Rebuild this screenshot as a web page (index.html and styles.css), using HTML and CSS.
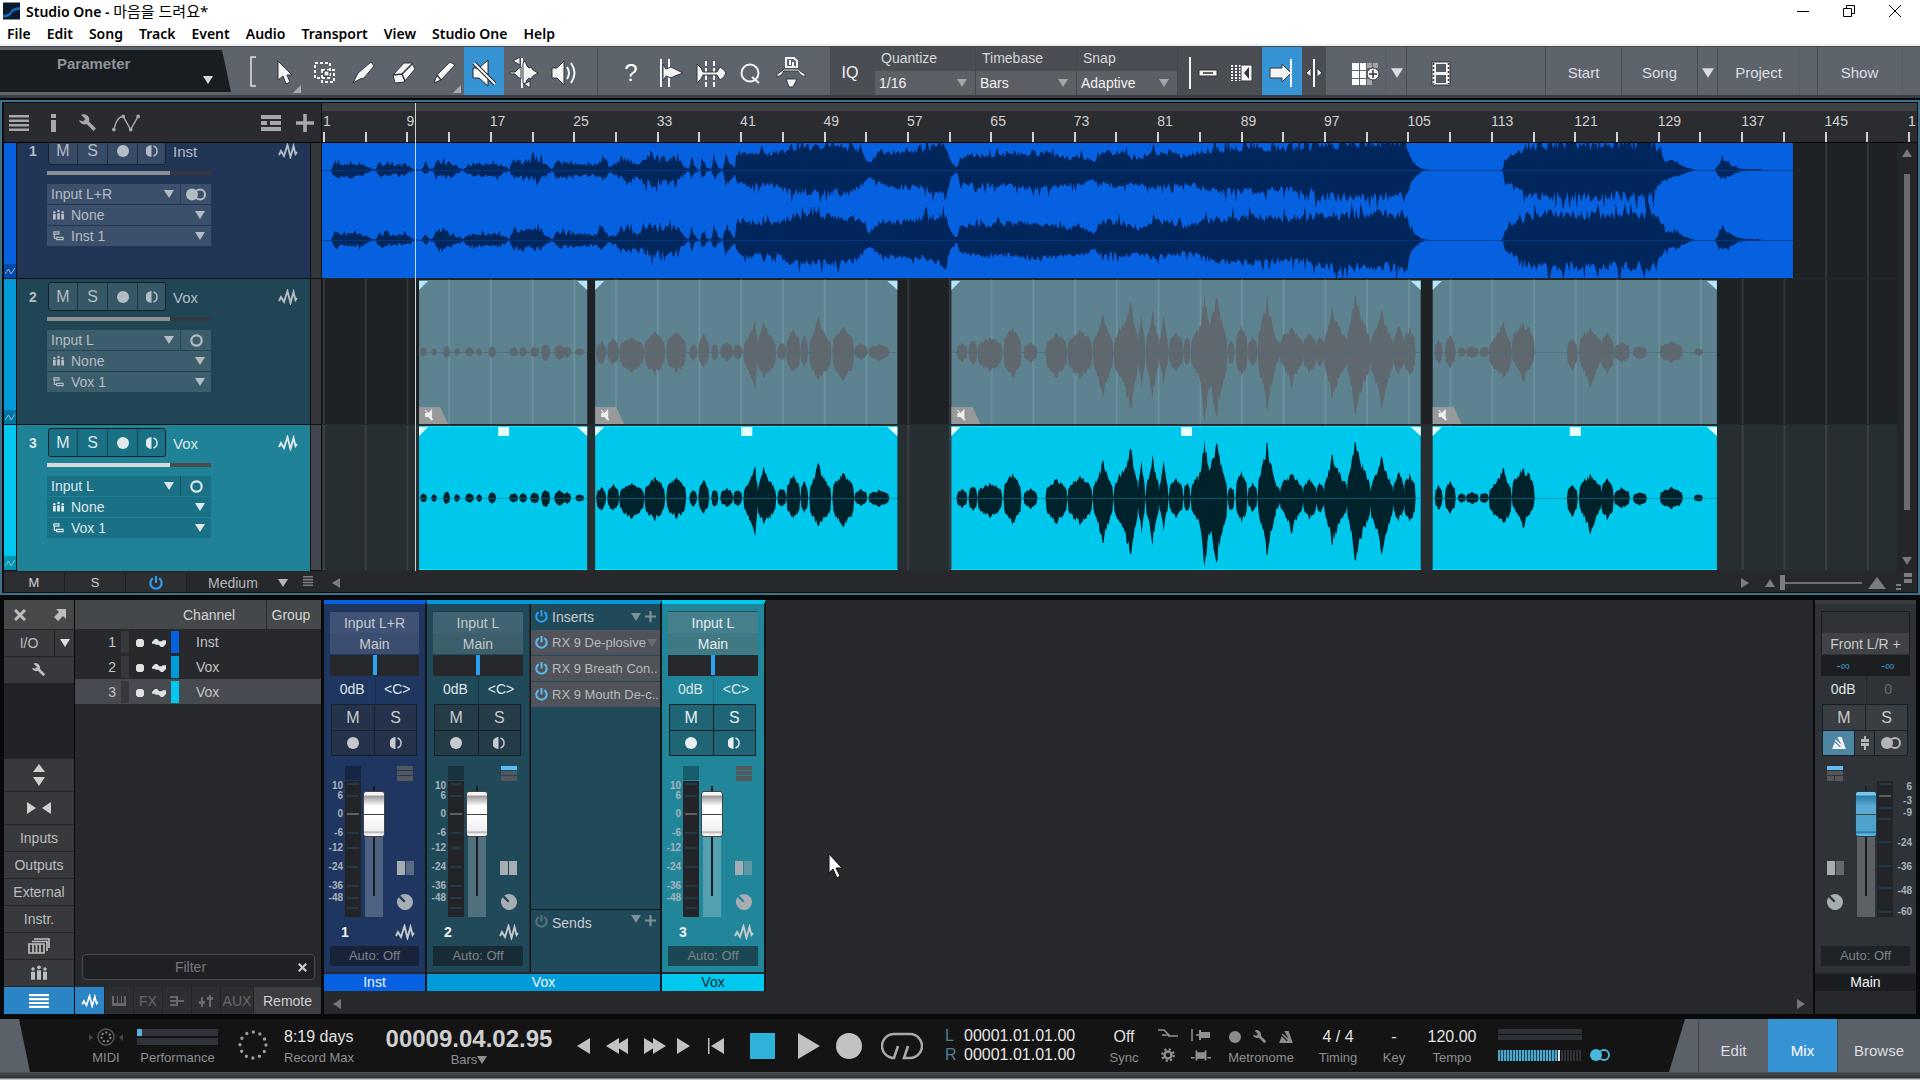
FILE: index.html
```html
<!DOCTYPE html>
<html lang="ko">
<head>
<meta charset="utf-8">
<title>Studio One - 마음을 드려요*</title>
<link rel="stylesheet" href="styles.css">
</head>
<body>
<svg class="defs" aria-hidden="true">
  <symbol id="down" viewBox="0 0 10 8"><path d="M0 0h10L5 8z"/></symbol>
  <symbol id="up" viewBox="0 0 10 8"><path d="M0 8h10L5 0z"/></symbol>
  <symbol id="left" viewBox="0 0 8 10"><path d="M8 0v10L0 5z"/></symbol>
  <symbol id="right" viewBox="0 0 8 10"><path d="M0 0v10l8-5z"/></symbol>
  <symbol id="dot" viewBox="0 0 12 12"><circle cx="6" cy="6" r="6"/></symbol>
  <symbol id="mon" viewBox="0 0 12 12"><path d="M5.500 0v12A6 6 0 0 1 5.500 0z"/><path d="M7.500 1a5.300 5.300 0 0 1 0 10" fill="none" stroke="currentColor" stroke-width="1.500"/></symbol>
  <symbol id="wave" viewBox="0 0 20 16"><path d="M1 12l2-4 3 5 3.500-11 3 12L15.500 3l2 8 1.500-2" fill="none" stroke="currentColor" stroke-width="1.900"/></symbol>
  <symbol id="stereo" viewBox="0 0 20 12"><circle cx="6" cy="6" r="6"/><circle cx="14" cy="6" r="5" fill="none" stroke="currentColor" stroke-width="2"/></symbol>
  <symbol id="mono" viewBox="0 0 12 12"><circle cx="6" cy="6" r="4.800" fill="none" stroke="currentColor" stroke-width="2"/></symbol>
  <symbol id="inst" viewBox="0 0 12 12"><path d="M0 5h3v6H0zM4.500 4h3v7h-3zM9 5h3v6H9z"/><circle cx="1.500" cy="3" r="1.300"/><circle cx="6" cy="1.700" r="1.400"/><circle cx="10.500" cy="3" r="1.300"/></symbol>
  <symbol id="layer" viewBox="0 0 12 12"><path d="M1 1.500h5.500V4H1zM4 7.500h7V10H4zM1.500 4v4.500H4" fill="none" stroke="currentColor" stroke-width="1.300"/></symbol>
  <symbol id="power" viewBox="0 0 14 14"><path d="M4 2.300a5.600 5.600 0 1 0 6 0M7 0v7" fill="none" stroke="currentColor" stroke-width="2.200"/></symbol>
  <symbol id="wrench" viewBox="0 0 18 18"><path d="M2 1a5.500 5.500 0 0 1 8 6.500l7 7-2.500 2.500-7-7A5.500 5.500 0 0 1 0 6l4 1.500L6.500 5z"/></symbol>
  <symbol id="auto" viewBox="0 0 10 8"><path d="M0 7l3.500-5L6 7l4-6" fill="none" stroke="currentColor"/></symbol>
  <symbol id="lines" viewBox="0 0 20 16"><path d="M0 0h20v2.500H0zM0 4.500h20V7H0zM0 9h20v2.500H0zM0 13.500h20V16H0z"/></symbol>
  <symbol id="plus" viewBox="0 0 12 12"><path d="M4.800 0h2.400v4.800H12v2.400H7.200V12H4.800V7.200H0V4.800h4.800z"/></symbol>
  <symbol id="cross" viewBox="0 0 12 12"><path d="M1 1l10 10M11 1L1 11" stroke="currentColor" stroke-width="3"/></symbol>
  <symbol id="stack" viewBox="0 0 16 15"><path d="M0 0h16v4H0zM0 5h16v4H0zM0 10h16v5H0z"/></symbol>
  <symbol id="knob" viewBox="0 0 16 16"><path d="M8 0a8 8 0 1 1-6.500 3.300L7 8.500 8.500 7 3.200 1.600A8 8 0 0 1 8 0z"/></symbol>
  <symbol id="split" viewBox="0 0 17 14"><path d="M0 0h8v14H0z"/><path d="M9 0h8v14H9z" opacity=".45"/></symbol>
  <symbol id="metro" viewBox="0 0 16 14"><path d="M6 0h5l5 14H0l3-8 6 6 1-1-7-7 1-1 7 6z"/></symbol>
  <symbol id="sine" viewBox="0 0 14 8"><path d="M0 4l4-4 3 3h3l1-1h3v2l-4 4-3-3H4L3 4z"/></symbol>
  <symbol id="speaker-off" viewBox="0 0 24 30"><path d="M1 10h6l9-8v26l-9-8H1z" fill="#fff" stroke="#222" stroke-width="1"/><path d="M2 5l21 21" stroke="#222" stroke-width="4"/><path d="M2 5l21 21" stroke="#fff" stroke-width="2"/></symbol>
</svg>

<header class="window-head">
  <div class="title-row">
    <svg class="app-icon" viewBox="0 0 18 18"><path fill="#0b1a2c" d="M0 0h18v18H0z"/><path d="M0 13q6 0 8-4t10-4v3q-7 0-9 4t-9 4z" fill="#1769b5"/></svg>
    <h1>Studio One - <span>마음을 드려요*</span></h1>
    <div class="win-buttons">
      <button aria-label="Minimize"><svg viewBox="0 0 14 14"><path d="M1 7.500h12"/></svg></button>
      <button aria-label="Restore"><svg viewBox="0 0 14 14"><path d="M1.500 4.500h8v8h-8zM4.500 4V1.500h8v8H10"/></svg></button>
      <button aria-label="Close"><svg viewBox="0 0 14 14"><path d="M1 1l12 12M13 1L1 13"/></svg></button>
    </div>
  </div>
  <nav class="menu"><a href="#">File</a><a href="#">Edit</a><a href="#">Song</a><a href="#">Track</a><a href="#">Event</a><a href="#">Audio</a><a href="#">Transport</a><a href="#">View</a><a href="#">Studio One</a><a href="#">Help</a></nav>
</header>

<div class="toolbar">
  <button class="parameter"><span>Parameter</span><svg class="i-down"><use href="#down"/></svg></button>
  <div class="tools">
    <svg class="bracket" viewBox="0 0 8 32"><path d="M7 1H2v29h5"/></svg>
    <button class="tool more" aria-label="Arrow"><svg viewBox="0 0 40 36"><path class="o" d="M14 6v19l5-4 3 8 4-2-3-7h5z"/></svg></button>
    <button class="tool" aria-label="Range"><svg viewBox="0 0 40 36"><path class="l" stroke-dasharray="3 2" d="M11 8h15v15H11z"/><path class="l" stroke-dasharray="3 2" d="M18 15h12v12H18z"/><path class="o" d="M20 16h5v5h-5z"/></svg></button>
    <button class="tool" aria-label="Split"><svg viewBox="0 0 40 36"><path class="o" d="M9 28l5-10L27 7l3 4-10 12-4 1z"/></svg></button>
    <button class="tool" aria-label="Eraser"><svg viewBox="0 0 40 36"><path class="o" d="M9 20L20 8h8l3 6-11 13-9 1z"/><path class="k" d="M9 20l9-1L29 8M18 19l3 7"/></svg></button>
    <button class="tool more" aria-label="Paint"><svg viewBox="0 0 40 36"><path class="o" d="M10 28l3-8L26 7l5 3-14 15z"/><path class="k" d="M13 20l4 5"/></svg></button>
    <button class="tool on" aria-label="Mute"><svg viewBox="0 0 40 36"><use href="#speaker-off" x="8" y="3" width="24" height="30"/></svg></button>
    <button class="tool" aria-label="Bend"><svg viewBox="0 0 40 36"><path class="l" d="M18 3v30"/><path class="o" d="M6 17h5l3-3 3-2v12l-3-2-3-3H6zM19 8l2-2 2 5 2 2 2-1 2 3 5 3-5 3-2 3-2-1-2 2-2 5-2-2z"/><path class="o" d="M9 6l7-4v8zM20 29l6-3v7z"/></svg></button>
    <button class="tool" aria-label="Listen"><svg viewBox="0 0 40 36"><path class="o" d="M8 13h5l7-7v24l-7-7H8z"/><path class="l" d="M23 12q4 6 0 12M27 8q7 10 0 20"/></svg></button>
    <span class="rule"></span>
    <button class="tool q" aria-label="Help">?</button>
    <button class="tool" aria-label="Strip silence"><svg viewBox="0 0 40 36"><path class="l" d="M10 4v28M18 4v28"/><path class="o" d="M12 9l3 5 5-2 4 2 8 4-8 3-4 2-5-2-3 5z"/></svg></button>
    <button class="tool" aria-label="Transients"><svg viewBox="0 0 40 36"><path class="l" stroke-dasharray="5 2" d="M15 6v26M23 6v26"/><path class="o" d="M6 9l4 4 2 4h14l3-5 4 3 2 3-2 4-4 3-3-5H12l-2 4-4 4z"/></svg></button>
    <button class="tool" aria-label="Quantize"><svg viewBox="0 0 40 36"><circle class="l" cx="19" cy="18" r="8.500"/><path class="l" d="M21 22l7 6"/></svg></button>
    <button class="tool" aria-label="Macro"><svg viewBox="0 0 40 36"><path class="l" d="M15 3h8l3 3v6H15zM19 5v5M22 7v4"/><path class="o" d="M6 22q5-1 7-6h14q2 5 7 6v-3q-4-2-7-5H13q-3 3-7 5zM15 24h11l-4 8h-4z"/></svg></button>
  </div>
  <div class="snap-area">
    <button class="iq" aria-label="Input Quantize">IQ</button>
    <label>Quantize<span class="sel"><select><option>1/16</option></select><svg class="i-down"><use href="#down"/></svg></span></label>
    <label>Timebase<span class="sel"><select><option>Bars</option></select><svg class="i-down"><use href="#down"/></svg></span></label>
    <label>Snap<span class="sel"><select><option>Adaptive</option></select><svg class="i-down"><use href="#down"/></svg></span></label>
    <button class="mini" aria-label="Cursor snap"><svg viewBox="0 0 40 36"><path class="l" d="M11 2v32"/><path class="o" d="M20 15h18v6H20z"/><path class="k" d="M24 18h10"/></svg></button>
    <button class="mini" aria-label="Snap to grid"><svg viewBox="0 0 40 36"><path class="l" stroke-dasharray="2 1" d="M11 10v16M15 10v16M19 10v16"/><path class="o" d="M20 10h11v16H20z"/><path fill="#333" d="M28 12v12l-5-6z"/></svg></button>
    <button class="tool on" aria-label="Autoscroll"><svg viewBox="0 0 40 36"><path class="o" d="M8 13h12V9l9 9-9 9v-4H8z"/><path class="l" d="M29 4v28"/></svg></button>
    <button class="thin" aria-label="Playhead"><svg viewBox="0 0 24 36"><path class="l" d="M12 4v28"/><path class="o" d="M9 13v9l-5-4zM15 13v9l5-4z"/></svg></button>
  </div>
  <div class="pages">
    <button class="gridbtn" aria-label="Pads"><svg viewBox="0 0 40 36"><path fill="#fff" d="M7 8h7v7H7zM15 8h6v7h-6zM7 16h7v7H7zM15 16h6v7h-6zM7 24h7v6H7zM15 24h6v6h-6z"/><path fill="#a0a4a8" d="M22 8h5v5h-5zM28 8h5v5h-5zM22 24h5v6h-5z"/><circle class="o" cx="28" cy="19" r="6"/><path class="k" d="M28 15v8M24 19h8"/></svg></button>
    <button class="arrow" aria-label="Pad options"><svg class="i-down"><use href="#down"/></svg></button>
    <button class="film" aria-label="Video"><svg viewBox="0 0 40 36"><path class="o" d="M10 7h18v23H10z"/><path fill="#555b62" d="M14 9h10v8H14zM14 20h10v8H14z"/><path d="M11.500 8v21M26.500 8v21" stroke="#333" stroke-width="1.500" stroke-dasharray="2 2"/></svg></button>
    <button class="page start">Start</button><button class="page song">Song</button><button class="arrow" aria-label="Song options"><svg class="i-down"><use href="#down"/></svg></button><button class="page project">Project</button><span class="thinline"></span><button class="page show">Show</button>
  </div>
</div>

<main class="arrange">
  <div class="arr-head">
    <div class="arr-tools">
      <button aria-label="Track list"><svg width="20" height="16"><use href="#lines"/></svg></button>
      <button aria-label="Inspector"><svg width="8" height="20" viewBox="0 0 8 20"><path d="M1 1h5v4H1zM1 7h5v12H1z"/></svg></button>
      <button aria-label="Options"><svg width="18" height="18"><use href="#wrench"/></svg></button>
      <button aria-label="Automation"><svg width="28" height="20" viewBox="0 0 30 20"><path d="M2 17Q5 3 12 3l8 14 8-14" fill="none" stroke="currentColor" stroke-width="1.500"/><circle cx="2" cy="17" r="2"/><circle cx="12" cy="3" r="2"/><circle cx="20" cy="17" r="2"/><circle cx="28" cy="3" r="2"/></svg></button>
      <span class="grow"></span>
      <button aria-label="Global tracks"><svg width="20" height="16" viewBox="0 0 20 16"><path d="M0 0h20v4H0zM0 6h6v4H0zM9 6h11v4H9zM0 12h20v4H0z"/></svg></button>
      <button aria-label="Add track"><svg width="18" height="18"><use href="#plus"/></svg></button>
    </div>
    <div class="ruler"><span>1</span><span>9</span><span>17</span><span>25</span><span>33</span><span>41</span><span>49</span><span>57</span><span>65</span><span>73</span><span>81</span><span>89</span><span>97</span><span>105</span><span>113</span><span>121</span><span>129</span><span>137</span><span>145</span><span>1</span></div>
  </div>

  <div class="arr-body">
    <div class="tracks">
      <section class="track t1">
        <div class="strip"><svg><use href="#auto"/></svg></div>
        <div class="info">
          <b class="num">1</b>
          <div class="msrm"><button>M</button><button>S</button><button aria-label="Record"><svg><use href="#dot"/></svg></button><button aria-label="Monitor"><svg><use href="#mon"/></svg></button></div>
          <span class="name">Inst</span><svg class="wv"><use href="#wave"/></svg>
          <input class="vol" type="range" aria-label="Volume 1" value="76">
          <div class="routes">
            <div><select aria-label="Input 1"><option>Input L+R</option></select><svg class="i-down"><use href="#down"/></svg><button class="ch" aria-label="Stereo"><svg class="st"><use href="#stereo"/></svg></button></div>
            <div><svg class="ri"><use href="#inst"/></svg><select aria-label="Group 1"><option>None</option></select><svg class="i-down"><use href="#down"/></svg></div>
            <div><svg class="ri"><use href="#layer"/></svg><select aria-label="Layer 1"><option>Inst 1</option></select><svg class="i-down"><use href="#down"/></svg></div>
          </div>
        </div>
        <div class="meter"></div>
        <svg class="lane" id="lane1" viewBox="0 0 1574 146" preserveAspectRatio="none"></svg>
      </section>
      <section class="track t2">
        <div class="strip"><svg><use href="#auto"/></svg></div>
        <div class="info">
          <b class="num">2</b>
          <div class="msrm"><button>M</button><button>S</button><button aria-label="Record"><svg><use href="#dot"/></svg></button><button aria-label="Monitor"><svg><use href="#mon"/></svg></button></div>
          <span class="name">Vox</span><svg class="wv"><use href="#wave"/></svg>
          <input class="vol" type="range" aria-label="Volume 2" value="76">
          <div class="routes">
            <div><select aria-label="Input 2"><option>Input L</option></select><svg class="i-down"><use href="#down"/></svg><button class="ch" aria-label="Mono"><svg><use href="#mono"/></svg></button></div>
            <div><svg class="ri"><use href="#inst"/></svg><select aria-label="Group 2"><option>None</option></select><svg class="i-down"><use href="#down"/></svg></div>
            <div><svg class="ri"><use href="#layer"/></svg><select aria-label="Layer 2"><option>Vox 1</option></select><svg class="i-down"><use href="#down"/></svg></div>
          </div>
        </div>
        <div class="meter"></div>
        <svg class="lane" id="lane2" viewBox="0 0 1574 146" preserveAspectRatio="none"></svg>
      </section>
      <section class="track t3">
        <div class="strip"><svg><use href="#auto"/></svg></div>
        <div class="info">
          <b class="num">3</b>
          <div class="msrm"><button>M</button><button>S</button><button aria-label="Record"><svg><use href="#dot"/></svg></button><button aria-label="Monitor"><svg><use href="#mon"/></svg></button></div>
          <span class="name">Vox</span><svg class="wv"><use href="#wave"/></svg>
          <input class="vol" type="range" aria-label="Volume 3" value="76">
          <div class="routes">
            <div><select aria-label="Input 3"><option>Input L</option></select><svg class="i-down"><use href="#down"/></svg><button class="ch" aria-label="Mono"><svg><use href="#mono"/></svg></button></div>
            <div><svg class="ri"><use href="#inst"/></svg><select aria-label="Group 3"><option>None</option></select><svg class="i-down"><use href="#down"/></svg></div>
            <div><svg class="ri"><use href="#layer"/></svg><select aria-label="Layer 3"><option>Vox 1</option></select><svg class="i-down"><use href="#down"/></svg></div>
          </div>
        </div>
        <div class="meter"></div>
        <svg class="lane" id="lane3" viewBox="0 0 1574 146" preserveAspectRatio="none"></svg>
      </section>
    </div>
    <div class="vscroll"><svg class="i-down"><use href="#up"/></svg><i></i><svg class="i-down"><use href="#down"/></svg></div>
  </div>
  <div class="playhead"></div>

  <div class="arr-foot">
    <button class="cell">M</button><button class="cell">S</button><button class="cell pw" aria-label="Power"><svg width="14" height="14"><use href="#power"/></svg></button>
    <label class="size"><select aria-label="Track height"><option>Medium</option></select><svg class="i-down"><use href="#down"/></svg></label>
    <svg class="ln" width="10" height="10" viewBox="0 0 20 16" preserveAspectRatio="none"><use href="#lines"/></svg>
    <svg class="tri" width="8" height="10"><use href="#left"/></svg>
    <span class="grow"></span>
    <svg class="tri r" width="8" height="10"><use href="#right"/></svg>
    <svg class="tri" width="12" height="8"><use href="#up"/></svg>
    <input class="zoom" type="range" aria-label="Zoom" value="0">
    <svg class="tri big" width="18" height="12" viewBox="0 0 10 8" preserveAspectRatio="none"><use href="#up"/></svg>
    <svg class="dots" width="18" height="18" viewBox="0 0 18 18"><path d="M9 1h8v4H9zM9 7h8v4H9zM1 12h5v2H1zM1 16h5v2H1z"/></svg>
  </div>
</main>

<section class="mixer">
  <aside class="mix-nav">
    <div class="row tall"><button aria-label="Close"><svg width="12" height="12"><use href="#cross"/></svg></button><button aria-label="Detach"><svg width="12" height="12" viewBox="0 0 12 12"><path d="M2 0h10v10L9 7l-5 5-4-4 5-5z"/></svg></button></div>
    <div class="row io"><button>I/O</button><button aria-label="I/O options"><svg class="i-down"><use href="#down"/></svg></button></div>
    <button class="row"><svg width="14" height="14"><use href="#wrench"/></svg></button>
    <span class="gap"></span>
    <button class="row tri2" aria-label="Height"><svg width="12" height="22" viewBox="0 0 12 22"><path d="M0 8h12L6 0zM0 13h12l-6 9z"/></svg></button>
    <button class="row tri2" aria-label="Width"><svg width="24" height="12" viewBox="0 0 24 12"><path d="M0 0v12l9-6zM24 0v12l-9-6z"/></svg></button>
    <button class="row">Inputs</button><button class="row">Outputs</button><button class="row">External</button><button class="row">Instr.</button>
    <button class="row" aria-label="Banks"><svg width="22" height="16" viewBox="0 0 22 16"><path d="M1 6h15v9H1zM4 3.500h15V13M6 1h15v9M5 6v9M8.500 6v9M12 6v9" fill="none" stroke="currentColor" stroke-width="1.700"/></svg></button>
    <button class="row" aria-label="Groups"><svg width="16" height="16"><use href="#inst"/></svg></button>
    <button class="row on" aria-label="Channel list"><svg width="20" height="14" viewBox="0 0 20 16" preserveAspectRatio="none"><use href="#lines"/></svg></button>
  </aside>
  <div class="ch-list">
    <table>
      <colgroup><col class="w-n"><col class="w-m"><col class="w-s"><col class="w-c"><col><col class="w-g"></colgroup>
      <thead><tr><th colspan="4"></th><th class="chn">Channel</th><th class="grp">Group</th></tr></thead>
      <tbody>
        <tr><td class="n">1</td><td class="m"><i></i></td><td class="s"><svg width="8" height="8"><use href="#dot"/></svg><svg width="14" height="8"><use href="#sine"/></svg></td><td class="c"><i class="c1"></i></td><td class="t" colspan="2">Inst</td></tr>
        <tr><td class="n">2</td><td class="m"><i></i></td><td class="s"><svg width="8" height="8"><use href="#dot"/></svg><svg width="14" height="8"><use href="#sine"/></svg></td><td class="c"><i class="c2"></i></td><td class="t" colspan="2">Vox</td></tr>
        <tr class="sel-row"><td class="n">3</td><td class="m"><i></i></td><td class="s"><svg width="8" height="8"><use href="#dot"/></svg><svg width="14" height="8"><use href="#sine"/></svg></td><td class="c"><i class="c3"></i></td><td class="t" colspan="2">Vox</td></tr>
      </tbody>
    </table>
    <div class="filter"><input type="text" placeholder="Filter" aria-label="Filter"><button aria-label="Clear filter"><svg width="9" height="9"><use href="#cross"/></svg></button></div>
    <div class="tabs">
      <button class="on" aria-label="Audio"><svg width="18" height="14"><use href="#wave"/></svg></button>
      <button aria-label="Instruments"><svg width="14" height="10" viewBox="0 0 14 10"><path d="M0 0h2v7h3V0h1v7h3V0h1v7h2V0h2v10H0z"/></svg></button>
      <button>FX</button>
      <button aria-label="Bus"><svg width="14" height="10" viewBox="0 0 14 10"><path d="M0 1h7v8H0M0 5h14" fill="none" stroke="currentColor" stroke-width="2"/></svg></button>
      <button aria-label="VCA"><svg width="14" height="12" viewBox="0 0 14 12"><path d="M0 6h6v3H0zM2 2h2v10H2zM8 2h6v3H8zM10 0h2v12h-2z"/></svg></button>
      <button class="aux">AUX</button>
      <button class="remote">Remote</button>
    </div>
  </div>

  <div class="console">
    <div class="channels">
      <section class="chan k1">
        <div class="cstrip">
          <div class="io-box"><button>Input L+R</button><button>Main</button></div>
          <div class="pan"><i></i></div>
          <div class="vals"><span>0dB</span><span>&lt;C&gt;</span></div>
          <div class="ms"><button>M</button><button>S</button><button aria-label="Record"><svg><use href="#dot"/></svg></button><button aria-label="Monitor"><svg><use href="#mon"/></svg></button></div>
          <div class="fader">
            <svg class="scale" viewBox="0 0 36 152"><path class="cap" d="M19 0h16v14H19z"/><path class="mt" d="M19 15h16v136H19z"/><path class="tk" d="M21 18h12M21 30h12M21 67h12M21 82h12M21 101h12M21 120h12M21 132h12M21 142h12"/><path class="tz" d="M21 48h12"/><g><text x="17" y="23">10</text><text x="17" y="33">6</text><text x="17" y="51">0</text><text x="17" y="70">-6</text><text x="17" y="85">-12</text><text x="17" y="104">-24</text><text x="17" y="123">-36</text><text x="17" y="135">-48</text></g></svg>
            <input class="fd" type="range" aria-label="Level 1" value="94">
            <div class="side"><svg class="stk"><use href="#stack"/></svg><svg class="spl"><use href="#split"/></svg><svg class="knb"><use href="#knob"/></svg></div>
          </div>
          <div class="foot"><b>1</b><svg class="wv"><use href="#wave"/></svg></div>
          <button class="automode">Auto: Off</button>
        </div>
        <footer>Inst</footer>
      </section>
      <section class="chan k2">
        <div class="pair">
          <div class="cstrip">
            <div class="io-box"><button>Input L</button><button>Main</button></div>
            <div class="pan"><i></i></div>
            <div class="vals"><span>0dB</span><span>&lt;C&gt;</span></div>
            <div class="ms"><button>M</button><button>S</button><button aria-label="Record"><svg><use href="#dot"/></svg></button><button aria-label="Monitor"><svg><use href="#mon"/></svg></button></div>
            <div class="fader">
              <svg class="scale" viewBox="0 0 36 152"><path class="cap" d="M19 0h16v14H19z"/><path class="mt" d="M19 15h16v136H19z"/><path class="tk" d="M21 18h12M21 30h12M21 67h12M21 82h12M21 101h12M21 120h12M21 132h12M21 142h12"/><path class="tz" d="M21 48h12"/><g><text x="17" y="23">10</text><text x="17" y="33">6</text><text x="17" y="51">0</text><text x="17" y="70">-6</text><text x="17" y="85">-12</text><text x="17" y="104">-24</text><text x="17" y="123">-36</text><text x="17" y="135">-48</text></g></svg>
              <input class="fd" type="range" aria-label="Level 2" value="94">
              <div class="side"><svg class="stk" viewBox="0 0 16 15"><path d="M0 5h16v4H0zM0 10h16v5H0z"/><path fill="#5cbcf5" d="M0 0h16v4H0z"/></svg><svg class="spl" viewBox="0 0 17 14"><path d="M0 0h8v14H0zM9 0h8v14H9z"/></svg><svg class="knb"><use href="#knob"/></svg></div>
            </div>
            <div class="foot"><b>2</b><svg class="wv"><use href="#wave"/></svg></div>
            <button class="automode">Auto: Off</button>
          </div>
          <div class="racks">
            <div class="rack-h"><svg class="pwr on"><use href="#power"/></svg><span>Inserts</span><svg class="i-down"><use href="#down"/></svg><svg class="pl"><use href="#plus"/></svg></div>
            <button class="fx"><svg class="pwr"><use href="#power"/></svg><span>RX 9 De-plosive</span><svg class="i-down"><use href="#down"/></svg></button>
            <button class="fx"><svg class="pwr"><use href="#power"/></svg><span>RX 9 Breath Con..</span></button>
            <button class="fx"><svg class="pwr"><use href="#power"/></svg><span>RX 9 Mouth De-c..</span></button>
            <div class="rack-h sends"><svg class="pwr"><use href="#power"/></svg><span>Sends</span><svg class="i-down"><use href="#down"/></svg><svg class="pl"><use href="#plus"/></svg></div>
          </div>
        </div>
        <footer>Vox</footer>
      </section>
      <section class="chan k3">
        <div class="cstrip">
          <div class="io-box"><button>Input L</button><button>Main</button></div>
          <div class="pan"><i></i></div>
          <div class="vals"><span>0dB</span><span>&lt;C&gt;</span></div>
          <div class="ms"><button>M</button><button>S</button><button aria-label="Record"><svg><use href="#dot"/></svg></button><button aria-label="Monitor"><svg><use href="#mon"/></svg></button></div>
          <div class="fader">
            <svg class="scale" viewBox="0 0 36 152"><path class="cap" d="M19 0h16v14H19z"/><path class="mt" d="M19 15h16v136H19z"/><path class="tk" d="M21 18h12M21 30h12M21 67h12M21 82h12M21 101h12M21 120h12M21 132h12M21 142h12"/><path class="tz" d="M21 48h12"/><g><text x="17" y="23">10</text><text x="17" y="33">6</text><text x="17" y="51">0</text><text x="17" y="70">-6</text><text x="17" y="85">-12</text><text x="17" y="104">-24</text><text x="17" y="123">-36</text><text x="17" y="135">-48</text></g></svg>
            <input class="fd" type="range" aria-label="Level 3" value="94">
            <div class="side"><svg class="stk"><use href="#stack"/></svg><svg class="spl"><use href="#split"/></svg><svg class="knb"><use href="#knob"/></svg></div>
          </div>
          <div class="foot"><b>3</b><svg class="wv"><use href="#wave"/></svg></div>
          <button class="automode">Auto: Off</button>
        </div>
        <footer>Vox</footer>
      </section>
    </div>
    <div class="hscroll"><svg width="8" height="10"><use href="#left"/></svg><svg width="8" height="10"><use href="#right"/></svg></div>
    <svg class="pointer" viewBox="0 0 14 26"><path d="M1 1v19l4-4 4 9 3-2-4-8h6z" fill="#fff" stroke="#111"/></svg>
  </div>

  <section class="chan main-out">
    <div class="cstrip">
      <div class="io-box"><button aria-label="Output"></button><button>Front L/R +</button></div>
      <div class="pan inf"><span>-∞</span><span>-∞</span></div>
      <div class="vals"><span>0dB</span><span class="off">0</span></div>
      <div class="ms"><button>M</button><button>S</button><div class="trio"><button class="mtr" aria-label="Metronome"><svg width="14" height="12"><use href="#metro"/></svg></button><button aria-label="Gain"><svg width="8" height="14" viewBox="0 0 8 14"><path d="M3 0h2v3h3v3H0V3h3zM0 7h8v3H5v4H3v-4H0z"/></svg></button><button aria-label="Channel mode"><svg width="20" height="12"><use href="#stereo"/></svg></button></div></div>
      <div class="fader">
        <div class="side"><svg class="stk" viewBox="0 0 16 15"><path d="M0 5h16v4H0zM0 10h7v5H0zM8 10h8v5H8z"/><path fill="#5cbcf5" d="M0 0h16v4H0z"/></svg><svg class="spl"><use href="#split"/></svg><svg class="knb"><use href="#knob"/></svg></div>
        <input class="fd" type="range" aria-label="Main level" value="94">
        <svg class="scale" viewBox="0 0 36 152"><path class="mt" d="M0 15h16v136H0z"/><path class="tk" d="M2 18h12M2 42h12M2 53h12M2 76h12M2 100h12M2 122h12M2 146h12"/><path class="tz" d="M2 30h12"/><g><text x="35" y="24">6</text><text x="35" y="38">-3</text><text x="35" y="50">-9</text><text x="35" y="80">-24</text><text x="35" y="104">-36</text><text x="35" y="128">-48</text><text x="35" y="149">-60</text></g></svg>
      </div>
      <div class="foot"></div>
      <button class="automode">Auto: Off</button>
    </div>
    <footer>Main</footer>
  </section>
</section>

<footer class="transport">
  <div class="t-panel">
    <div class="col midi"><svg width="34" height="18" viewBox="0 0 34 18"><path d="M0 6v7l4-3.500zM34 6v7l-4-3.500z" fill="#444"/><circle cx="17" cy="9" r="8" fill="none" stroke="#555" stroke-width="1.500"/><circle cx="17" cy="9" r="4.500" fill="none" stroke="#888" stroke-width="2" stroke-dasharray="2 2"/></svg><span class="lb">MIDI</span></div>
    <div class="col perf"><div class="bars"><i></i><i></i></div><span class="lb">Performance</span></div>
    <svg class="ring" viewBox="0 0 30 30"><circle cx="15" cy="15" r="13" fill="none" stroke="#999" stroke-width="3.400" stroke-linecap="round" stroke-dasharray="0 6.807"/></svg>
    <div class="col rec"><span class="v">8:19 days</span><span class="lb">Record Max</span></div>
    <div class="col pos"><b>00009.04.02.95</b><button class="lb">Bars<svg class="i-down"><use href="#down"/></svg></button></div>
    <div class="keys">
      <button aria-label="Previous marker"><svg width="13" height="16" viewBox="0 0 13 16"><path d="M13 0v16L0 8z"/></svg></button>
      <button aria-label="Rewind"><svg width="22" height="16" viewBox="0 0 22 16"><path d="M13 0v16L0 8zM22 0v16L9 8z"/></svg></button>
      <button aria-label="Forward"><svg width="22" height="16" viewBox="0 0 22 16"><path d="M0 0v16l13-8zM9 0v16l13-8z"/></svg></button>
      <button aria-label="Next marker"><svg width="13" height="16" viewBox="0 0 13 16"><path d="M0 0v16l13-8z"/></svg></button>
      <button aria-label="Return to zero"><svg width="16" height="16" viewBox="0 0 16 16"><path d="M0 0h1.500v16H0zM16 0v16L3 8z"/></svg></button>
      <button class="stop" aria-label="Stop"></button>
      <button aria-label="Play"><svg width="22" height="26" viewBox="0 0 22 26"><path d="M0 0v26l22-13z"/></svg></button>
      <button aria-label="Record"><svg width="26" height="26"><use href="#dot"/></svg></button>
      <button aria-label="Loop"><svg width="42" height="28" viewBox="0 0 42 28"><path d="M17 14l-4 12a12 12 0 0 1 0-24h16a12 12 0 0 1 0 24h-6l4-12M10 26h4" fill="none" stroke="#aaa" stroke-width="2.500"/></svg></button>
    </div>
    <div class="loc"><span>L</span><b>00001.01.01.00</b><span>R</span><b>00001.01.01.00</b></div>
    <div class="col sync"><span class="v">Off</span><span class="lb">Sync</span></div>
    <div class="icons4">
      <svg viewBox="0 0 20 14"><path d="M0 2h6l5 5H4M10 8h10" class="s"/></svg>
      <svg viewBox="0 0 20 14"><path d="M1 1v12M5 7h4" class="s"/><path d="M8 2h2v2h9v6h-9v2H8z"/></svg>
      <svg viewBox="0 0 14 14"><circle cx="7" cy="7" r="3.500" fill="none" stroke="currentColor" stroke-width="2.500"/><circle cx="7" cy="7" r="5.800" fill="none" stroke="currentColor" stroke-width="2.200" stroke-dasharray="2.200 2.355"/></svg>
      <svg viewBox="0 0 22 14"><path d="M0 10h4M18 10h4" class="s"/><path d="M5 2h2v2h8V2h2v11h-2v-2H7v2H5z"/></svg>
    </div>
    <div class="col met"><div class="mi"><svg width="12" height="12"><use href="#dot"/></svg><svg width="14" height="14"><use href="#wrench"/></svg><svg width="14" height="12"><use href="#metro"/></svg></div><span class="lb">Metronome</span></div>
    <div class="col tim"><span class="v">4 / 4</span><span class="lb">Timing</span></div>
    <div class="col key"><span class="v">-</span><span class="lb">Key</span></div>
    <div class="col tmp"><span class="v">120.00</span><span class="lb">Tempo</span></div>
    <div class="levels"><i class="d"></i><i class="d"></i><i class="w"><em></em></i></div>
    <svg class="st2" width="20" height="12"><use href="#stereo"/></svg>
  </div>
  <div class="t-pages"><button>Edit</button><button class="on">Mix</button><button>Browse</button></div>
</footer>
<div class="edge"></div>
<script src="waves.js"></script>
</body>
</html>
```
FILE: styles.css
```css
* { box-sizing: border-box; }
html { background: #08090a; }
body { margin: 0; min-height: 100vh; display: flex; flex-direction: column; background: #08090a; color: #c9cbcd; font: 14px/16px "Liberation Sans", "Noto Sans CJK KR", sans-serif; overflow-x: hidden; }
button, select, input { font: inherit; color: inherit; margin: 0; padding: 0; border: 0; background: none; border-radius: 0; }
button { display: flex; align-items: center; justify-content: center; }
select { appearance: none; outline: 0; }
svg { fill: currentColor; display: block; flex: none; }
.defs { width: 0; height: 0; position: absolute; }
.grow { flex: 1; }
.i-down { width: 10px; height: 8px; }

/* window head */
.window-head { background: #fff; color: #000; height: 46px; border-bottom: 2px solid #efefef; }
.title-row { display: flex; align-items: center; height: 22px; padding-left: 3px; gap: 6px; }
.app-icon { width: 17px; height: 18px; }
h1 { margin: 0; flex: 1; font: 600 14px/22px "Noto Sans", "Noto Sans CJK KR", sans-serif; }
h1 span { font-size: 15px; font-weight: 400; }
.win-buttons { display: flex; padding-right: 2px; }
.win-buttons button { width: 46px; height: 22px; }
.win-buttons svg { width: 14px; height: 14px; fill: none; stroke: #000; }
.menu { display: flex; gap: 16px; padding-left: 7px; }
.menu a { color: #000; text-decoration: none; font: 600 14px/24px "Noto Sans", sans-serif; }

/* toolbar */
.toolbar { display: flex; height: 52px; background: #5d646c; border-top: 1px solid #45484d; border-bottom: 3px solid #3a3d41; }
.toolbar .o { fill: #f4f4f4; stroke: #33373b; stroke-width: 1; }
.toolbar .l { fill: none; stroke: #f4f4f4; stroke-width: 2; }
.toolbar .k { fill: none; stroke: #33373b; stroke-width: 1.500; }
.parameter { width: 231px; height: 42px; margin-top: 3px; background: #191c21; clip-path: polygon(0 0, 222px 0, 100% 100%, 0 100%); color: #8f9297; font-size: 15px; font-weight: bold; justify-content: space-between; padding: 0 17px 14px 57px; }
.parameter .i-down { width: 12px; color: #d8d8d8; margin-top: 32px; }
.tools { display: flex; flex: 1; align-items: stretch; padding-left: 18px; }
.bracket { width: 8px; height: 32px; margin: 9px 7px 0 0; fill: none; stroke: #e0e0e0; stroke-width: 1.500; }
.tool, .mini, .thin, .gridbtn, .arrow, .film, .page, .iq { padding-top: 3px; }
.tool { width: 40px; position: relative; }
.tool svg { width: 40px; height: 36px; }
.tool.on { background: #3794d4; }
.more::after { content: ""; position: absolute; right: 3px; bottom: 2px; border: 4px solid transparent; border-right-color: #a9adb1; border-bottom-color: #a9adb1; }
.rule { width: 1px; background: #484d53; margin: 0 13px; }
.q { color: #fff; font-size: 24px; }
.snap-area { display: flex; width: 496px; background: #4a4d54; color: #d6d7d9; }
.iq { width: 45px; font-size: 16px; color: #f0f0f0; padding-right: 5px; }
.snap-area label { width: 101px; padding-top: 3px; display: flex; flex-direction: column; text-indent: 6px; border-right: 1px solid #44474d; }
.sel { display: flex; align-items: center; margin-top: 5px; height: 24px; background: #5c6066; padding-right: 8px; }
.sel select { flex: 1; width: 0; padding-left: 4px; text-indent: 0; color: #f0f0f0; }
.sel svg { color: #a3a6a9; }
.mini { width: 42px; }
.mini svg { width: 40px; height: 36px; }
.thin { width: 24px; }
.thin svg { width: 24px; height: 36px; }
.pages { display: flex; width: 594px; color: #dcdde0; }
.gridbtn { width: 61px; padding-left: 17px; border-right: 1px solid #565c64; }
.gridbtn svg, .film svg { width: 40px; height: 36px; }
.arrow { width: 20px; border-right: 1px solid #484d53; }
.arrow svg { width: 12px; height: 10px; }
.film { width: 139px; border-right: 1px solid #484d53; justify-content: flex-start; padding-left: 15px; }
.page { font-size: 15px; width: 76px; border-right: 1px solid #484d53; }
.project { width: 82px; border-color: #565c64; }
.thinline { width: 18px; border-right: 1px solid #484d53; }
.show { width: 84px; border-color: #565c64; }

/* arrange */
.arrange { position: relative; margin-top: 2px; border: 2px solid #3f7189; padding: 1px; background: #0d0e10; display: flex; flex-direction: column; }
.arr-head { display: grid; grid-template-columns: 317px 1fr; column-gap: 1px; height: 40px; border-bottom: 1px solid #000; padding-left: 1px; }
.arr-tools { display: flex; align-items: center; background: #2a2b2e; color: #a8a8aa; padding: 0 7px 0 5px; gap: 15px; }
.arr-tools button:nth-of-type(2) { margin: 0 6px; }
.ruler { display: grid; grid-template-columns: repeat(19, minmax(0, 1fr)) 9px; background: linear-gradient(#3d3f45 8px, #2b2c30 8px); padding: 10px 0 0 1px; overflow: hidden; }
.ruler span { position: relative; color: #d0d0d0; }
.ruler span::before, .ruler span:not(:last-child)::after { content: ""; position: absolute; left: 0; bottom: 0; width: 2px; height: 10px; background: #d0d0d0; }
.ruler span:not(:last-child)::after { left: 50%; }
.arr-body { display: grid; grid-template-columns: 1fr 20px; height: 428px; padding-left: 1px; }
.tracks { overflow: hidden; }
.track { display: grid; grid-template-columns: 13px 293px 12px 1fr; height: 146px; }
.track.t1 { margin-top: -10px; }
.strip { border-right: 1px solid #111; border-bottom: 1px solid #111; display: flex; align-items: flex-end; color: #9bc; }
.strip svg { width: 12px; height: 14px; padding: 2px 1px; background: rgba(0, 0, 0, .25); }
.t1 .strip { background: #0561e0; } .t2 .strip { background: #009bd8; } .t3 .strip { background: #00c8ee; }
.info { display: grid; grid-template-columns: 30px 118px 1fr 32px; grid-template-rows: 32px 13px 1fr; border-bottom: 1px solid #111; align-items: start; color: #b4bcc4; }
.t1 .info { background: #213656; } .t2 .info { background: #204655; }
.t3 .info { background: #1f8297; color: #dfe8ea; border-bottom: 0; }
.num { padding: 10px 0 0 12px; }
.msrm { display: grid; grid-template-columns: 28px 30px 30px 28px; height: 29px; margin: 3px 0 0 1px; border: 1px solid #13222c; border-radius: 3px; background: rgba(255, 255, 255, .1); width: 118px; font-size: 16px; }
.t3 .msrm, .t3 .routes > div { background: rgba(20, 90, 110, .45); }
.msrm button + button { border-left: 1px solid rgba(0, 0, 0, .4); }
.msrm svg { width: 12px; height: 12px; }
.name { font-size: 15px; padding: 11px 0 0 8px; }
.wv { width: 20px; height: 16px; }
.info .wv { margin-top: 10px; }
.vol { grid-column: 2 / 4; appearance: none; width: 164px; height: 4px; margin-top: 6px; background: linear-gradient(90deg, #8d9093 123px, #34373c 123px); }
.t3 .vol { background: linear-gradient(90deg, #d8dadb 123px, #4b4c50 123px); }
.vol::-webkit-slider-thumb { appearance: none; width: 1px; height: 4px; }
.routes { grid-column: 2 / 4; display: flex; flex-direction: column; gap: 1px; width: 164px; margin-top: 6px; }
.routes > div { display: flex; align-items: center; height: 20px; background: rgba(255, 255, 255, .13); padding: 0 6px 0 4px; }
.routes select { flex: 1; width: 0; }
.ri { width: 11px; height: 12px; margin: 0 7px 0 2px; }
.ch { width: 31px; height: 20px; margin: 0 -6px 0 6px; border-left: 1px solid rgba(0, 0, 0, .25); }
.ch svg { width: 13px; height: 13px; }
.ch .st { width: 20px; height: 13px; }
.meter { background: #36373b; border: solid #111; border-width: 0 1px 1px 1px; }
.t3 .meter { background: #43464e; }
.lane { width: 100%; height: 146px; background: #1f2225; }
.t3 .lane { background: #282f32; }
.vscroll { background: #25262a; display: flex; flex-direction: column; align-items: center; padding: 6px 0; color: #77787b; gap: 17px; }
.vscroll i { width: 6px; height: 336px; background: #6b6c70; margin-bottom: 30px; }
.playhead { position: absolute; left: 413px; top: 1px; width: 1px; height: 468px; background: #c8d4dc; }
.arr-foot { display: flex; align-items: center; height: 21px; background: #27282c; color: #7c7d80; margin-left: 1px; padding-top: 2px; }
.cell { width: 61px; height: 19px; background: #2d2e31; border-right: 1px solid #1f2023; color: #cfd0d2; font-size: 13px; }
.pw { color: #3498e8; }
.size { display: flex; align-items: center; width: 104px; padding-left: 21px; color: #b5b7b9; }
.size select { width: 70px; }
.ln { margin: 0 19px 4px 12px; }
.r { margin-right: 15px; }
.zoom { appearance: none; width: 82px; height: 16px; margin: 0 6px 0 4px; background: linear-gradient(#6f7073, #6f7073) no-repeat 0 7px / 100% 2px; }
.zoom::-webkit-slider-thumb { appearance: none; width: 5px; height: 15px; background: #7c7d80; }
.dots { margin: 0 4px 4px 9px; }

/* mixer */
.mixer { flex: 1; margin-top: 5px; padding: 0 4px; display: grid; grid-template-columns: 70px 246px 1fr 101px; column-gap: 1px; }
.mix-nav { display: flex; flex-direction: column; gap: 1px; background: #222326; color: #bcbdbf; }
.mix-nav .row { width: 70px; height: 26px; background: #38393d; display: flex; flex: none; align-items: center; justify-content: center; }
.mix-nav .tall { height: 29px; background: #46484a; justify-content: space-between; padding: 0 8px 0 10px; }
.mix-nav .io { justify-content: stretch; }
.io button { width: 50px; height: 100%; }
.io button + button { width: 20px; border-left: 1px solid #222; color: #ddd; }
.gap { flex: 1; }
.mix-nav .tri2 { height: 32px; color: #d0d0d0; }
.mix-nav .on { height: 27px; background: #2a84c6; color: #fff; }
.ch-list { background: #28292d; display: flex; flex-direction: column; }
table { border-collapse: collapse; width: 100%; table-layout: fixed; }
.w-n { width: 46px; } .w-m { width: 13px; } .w-s { width: 37px; } .w-c { width: 12px; } .w-g { width: 55px; }
th { height: 29px; background: #45484a; font-weight: 400; padding: 0; color: #d2d3d4; text-align: left; }
.grp { border-left: 1px solid #2a2b2d; padding-left: 5px; }
td { height: 25px; padding: 0; color: #c2c3c5; line-height: 14px; }
td.n { text-align: right; padding-right: 5px; }
td.m i, td.c i { display: block; width: 8px; height: 22px; background: #36383c; }
td.s svg { display: inline-block; vertical-align: middle; color: #e2e2e2; }
td.s { padding-left: 2px; }
td.s svg:first-child { margin-right: 8px; }
td.t { padding-left: 13px; }
td.c .c1 { background: #0561e0; } td.c .c2 { background: #009bd8; } td.c .c3 { background: #00c8ee; }
.sel-row { background: #484a52; }
.filter { margin: auto 6px 7px 7px; height: 26px; border: 1px solid #4a4b4f; border-radius: 4px; background: #1f2024; display: flex; align-items: center; padding-right: 7px; }
.filter input { flex: 1; width: 0; text-align: center; }
.filter input::placeholder { color: #77787a; opacity: 1; }
.filter button { color: #c8c8c8; width: 9px; }
.tabs { display: flex; height: 27px; gap: 1px; background: #222326; color: #66686c; }
.tabs button { width: 28px; background: #2d2e32; }
.tabs .on { width: 29px; background: #2a84c6; color: #fff; }
.tabs .aux { flex: 1; }
.tabs .remote { width: 67px; background: #3d3e41; color: #cfd0d1; }
.console { position: relative; background: #28292d; display: flex; flex-direction: column; border-left: 2px solid #0b0b0c; border-right: 1px solid #0b0b0c; }
.channels { flex: 1; display: flex; }
.hscroll { height: 23px; display: flex; justify-content: space-between; align-items: center; padding: 3px 8px 0 9px; color: #77787a; }
.pointer { position: absolute; left: 504px; top: 253px; width: 14px; height: 26px; }
.chan { display: flex; flex-direction: column; width: 103px; border-right: 2px solid #14161a; border-top: 4px solid; }
.chan .cstrip { flex: 1; color: #c6cacd; padding: 7px 6px 6px; width: 101px; display: flex; flex-direction: column; }
.k1 { border-top-color: #0561e0; } .k2 { border-top-color: #009bd8; width: 235px; } .k3 { border-top-color: #00c8ee; width: 104px; }
.k1 .cstrip { background: #1f3660; } .k2 .cstrip { background: #20495a; width: 102px; } .k3 .cstrip { background: #22869a; width: 102px; }
.chan footer { height: 17px; line-height: 17px; text-align: center; color: #f0f4f8; margin-top: 2px; }
.k1 footer { background: #0561e0; } .k2 footer { background: #009bd8; } .k3 footer { background: #00c8ee; color: #0b2a33; }
.io-box { background: rgba(255, 255, 255, .15); border-top: 1px solid rgba(0, 0, 0, .4); display: grid; grid-template-rows: 21px 21px; }
.io-box button { width: 100%; }
.io-box button:last-child { background: rgba(0, 0, 0, .06); }
.k3 .io-box { background: #45808c; color: #e4ecee; }
.pan { height: 21px; margin-top: 1px; background: #26282c; display: flex; justify-content: center; }
.pan i { width: 4px; background: #2aa2f4; height: 20px; }
.vals { display: grid; grid-template-columns: 1fr 1fr; height: 28px; line-height: 27px; text-align: center; color: #dfe4e8; }
.vals span + span { border-left: 1px solid rgba(0, 0, 0, .2); }
.ms { display: grid; grid-template-columns: 1fr 1fr; grid-template-rows: 25px 25px; margin: 0 2px 0 1px; background: rgba(40, 48, 58, .55); border: 1px solid #15202a; height: 52px; font-size: 16px; }
.ms button:nth-child(even) { border-left: 1px solid #15202a; }
.ms button:nth-child(n+3) { border-top: 1px solid #15202a; }
.ms > button svg { width: 12px; height: 12px; }
.k3 .ms { background: rgba(30, 80, 95, .6); color: #e8f0f2; }
.fader { display: flex; height: 152px; margin: 10px 0 0 -4px; }
.scale { width: 36px; height: 152px; }
.scale text { font: bold 10px "Liberation Sans", sans-serif; text-anchor: end; fill: #a9b2ba; }
.cap { fill: rgba(0, 0, 0, .3); } .mt { fill: #222428; }
.tk { stroke: #20506c; } .tz { stroke: #9a9c9e; }
.fd { appearance: none; writing-mode: vertical-lr; direction: rtl; width: 22px; height: 131px; margin: 20px 0 0 1px; background: linear-gradient(#1b1d20, #1b1d20) no-repeat 10px 0 / 2px 110px, linear-gradient(rgba(255, 255, 255, .22), rgba(255, 255, 255, .22)) no-repeat 2px 20px / 18px 111px; }
.fd::-webkit-slider-thumb { appearance: none; width: 22px; height: 46px; border-radius: 3px; border: 1px solid #444; background: linear-gradient(#f4f4f4 3px, #999 4px, #fff 14px, #fff 22px, #444 22px, #444 23px, #fff 23px, #eee 39px, #aaa 40px, #f4f4f4 42px); }
.side { flex: 1; display: flex; flex-direction: column; align-items: center; color: #a6adb3; padding-left: 6px; }
.stk { width: 16px; height: 15px; color: #54585c; }
.spl { width: 17px; height: 14px; margin: 80px 0 19px; }
.knb { width: 16px; height: 16px; }
.foot { display: flex; height: 28px; align-items: center; justify-content: space-between; padding: 0 4px 0 11px; }
.foot b { color: #f0f0f0; }
.automode { height: 20px; background: rgba(18, 20, 26, .55); color: #7d848a; font-size: 13px; margin-top: auto; }
.pair { display: flex; flex: 1; }
.racks { width: 130px; margin-left: 1px; background: #20495a; display: flex; flex-direction: column; border-left: 1px solid #10171c; }
.rack-h { display: flex; height: 25px; align-items: center; gap: 4px; padding: 0 4px; }
.rack-h span { flex: 1; }
.rack-h .i-down, .pl { color: #7f8f98; }
.pwr { width: 13px; height: 13px; color: #5cb8f0; }
.pwr.on { color: #2a9df0; }
.pl { width: 11px; height: 11px; }
.fx { height: 25px; margin-top: 1px; background: #505359; gap: 4px; padding: 0 4px; justify-content: flex-start; font-size: 13px; color: #b6bcc0; white-space: nowrap; width: 129px; overflow: hidden; }
.fx .i-down { color: #6a6d72; margin-left: -3px; }
.sends { margin-top: auto; border-top: 1px solid #10171c; height: 63px; align-items: flex-start; padding-top: 5px; }
.sends .pwr { color: #56717d; }
.main-out { width: 101px; border-right: 0; border-top-color: #3a3c42; background: #28292d; padding-bottom: 23px; }
.main-out .cstrip { background: #2f3338; }
.main-out .io-box { background: #2f3338; border: solid #1b1c1f; border-width: 1px 1px 0; }
.main-out .io-box button:last-child { background: #404245; }
.main-out footer { background: #1c1d20; }
.inf { background: #1c1e21; color: #3a8fc0; display: grid; grid-template-columns: 1fr 1fr; text-align: center; line-height: 22px; font-size: 13px; }
.off { color: #686b6f; }
.main-out .ms { background: #3a3d42; }
.trio { grid-column: 1 / 3; display: grid; grid-template-columns: 31px 20px 1fr; }
.trio button { border-top: 1px solid #15202a; border-left: 1px solid #15202a; color: #b4b6b8; }
.trio .mtr { background: #4c86a3; color: #f4f4f4; border-left: 0; }
.main-out .fader { margin: 10px -3px 0 0; }
.main-out .side { align-items: flex-start; padding-left: 6px; }
.main-out .fd::-webkit-slider-thumb { border-color: #1a3c50; background: linear-gradient(#7cc8ec 3px, #2b7ca6 4px, #5aaad2 14px, #5aaad2 22px, #444 22px, #444 23px, #4fa2cc 23px, #4fa2cc 39px, #246d94 40px, #5ab4e0 42px); }

/* transport */
.transport { display: flex; height: 53px; margin-top: 5px; background: #5b6168; }
.t-panel { flex: 1; display: flex; background: #141414; clip-path: polygon(19px 0, calc(100% - 13px) 0, calc(100% - 29px) 100%, 30px 100%); padding-left: 89px; align-items: stretch; }
.col { display: flex; flex-direction: column; align-items: center; justify-content: space-between; padding: 9px 0 6px; }
.lb { font-size: 13px; line-height: 16px; color: #8d8e90; }
.v { font-size: 16px; line-height: 18px; color: #e2e2e2; }
.t-panel .midi { width: 34px; } .t-panel .perf { width: 81px; margin-left: 14px; }
.bars { display: flex; flex-direction: column; gap: 2px; width: 81px; padding-top: 1px; }
.bars i { height: 7px; background: #30343a; }
.bars i:first-child { background: linear-gradient(90deg, #56b0dc 5px, #30343a 5px); }
.ring { width: 30px; height: 30px; margin: 11px 16px 0 20px; }
.rec { align-items: flex-start; width: 94px; }
.pos { width: 182px; padding-top: 7px; }
.pos b { font-size: 24px; line-height: 26px; color: #cfcfcf; }
.keys { display: flex; align-items: center; color: #c2c2c2; width: 385px; padding-left: 17px; }
.keys button { flex: none; margin-right: 16px; }
.keys button:nth-child(4) { margin-right: 18px; }
.keys button:nth-child(3) { margin-right: 11px; }
.keys button:nth-child(5) { margin-right: 26px; }
.keys .stop { width: 25px; height: 26px; background: #2fb2da; margin-right: 23px; }
.keys button:nth-child(8) { margin-right: 19px; }
.loc { display: grid; grid-template-columns: 19px 1fr; align-content: start; width: 164px; font-size: 16px; line-height: 19px; padding-top: 7px; }
.loc b { font-weight: 400; color: #e6e6e6; }
.loc span { color: #4e7f96; }
.sync { width: 30px; }
.icons4 { display: grid; grid-template-columns: 20px 20px; grid-template-rows: 14px 14px; gap: 6px 13px; margin: 9px 15px 0 19px; color: #8f9092; justify-items: center; }
.icons4 svg { width: 20px; height: 14px; }
.s { fill: none; stroke: currentColor; stroke-width: 1.500; }
.met { width: 70px; }
.mi { display: flex; gap: 12px; align-items: center; color: #8a8c8e; height: 18px; }
.tim { width: 40px; margin-left: 22px; }
.key { width: 24px; margin-left: 24px; }
.tmp { width: 48px; margin-left: 22px; }
.levels { display: flex; flex-direction: column; width: 84px; margin-left: 22px; padding-top: 10px; }
.levels .d { height: 5px; margin-bottom: 1px; background: #2e3136; }
.levels .w { height: 11px; margin-top: 9px; background: repeating-linear-gradient(90deg, #2e3136 0 2px, #141414 2px 3px); }
.levels em { display: block; height: 11px; width: 62px; background: repeating-linear-gradient(90deg, #4ba5cc 0 2px, #1f4250 2px 3px); border-right: 2px solid #e6e6e6; }
.st2 { margin: 30px 0 0 8px; color: #4ab6dc; }
.t-pages { display: flex; color: #dcdde0; }
.t-pages button { width: 70px; font-size: 15px; padding-top: 10px; border-left: 1px solid #43474c; }
.t-pages button:last-child { width: 83px; }
.t-pages .on { background: #3794d4; width: 69px; border: 0; color: #fff; }
.edge { height: 8px; background: linear-gradient(#4a4f54, #2e3236 6px, #c8c8c8 7px); }
```
FILE: waves.js
```js
// Draws the timeline lanes: bar grid, clips and waveforms.
const ORIGIN = 322;
let seed = 7;
const rnd = () => (seed = (seed * 16807) % 2147483647) / 2147483647;

// Vocal phrases: start, end, peak above, peak below, position of the peak
const vox = [
  [420,427,5,5],[431,437,4,4],[443,450,7,7],[454,460,4,4],[465,474,5,5],[476,482,4,4],[488,496,6,6],[509,518,5,5],[519,527,5,5],[530,539,6,6],[541,550,9,10],[554,565,8,8],[563,571,6,6],[575,584,4,4],
  [596,606,11,13],[607,619,14,13],[619,644,15,21],[644,665,21,23],[666,686,21,21],[689,697,8,9],[698,709,18,16],[711,718,9,10],[720,733,10,9],[733,742,9,9],[743,758,32,38,.8],[757,776,32,26,.3],[777,786,10,10],[786,800,23,21],[800,808,17,15],[809,831,36,28,.4],[832,854,25,29],[854,867,9,8],[868,889,8,9],
  [956,967,9,10],[968,977,13,14],[977,1002,15,20],[1003,1021,25,27],[1023,1037,10,11],[1045,1067,19,26],[1067,1092,22,27],[1092,1113,39,47],[1113,1138,51,58,.7],[1137,1145,38,36],[1145,1159,43,48],[1158,1168,37,33],[1168,1183,20,20],[1183,1190,17,15],[1190,1203,22,22],[1197,1214,59,70,.4],[1203,1227,56,66,.55],[1227,1234,12,14],[1235,1247,27,25],[1247,1257,16,14],[1257,1276,58,60],[1268,1280,16,14],[1279,1303,24,36],[1302,1316,20,22],[1315,1324,16,16],[1323,1347,45,49,.35],[1346,1370,58,65,.35],[1369,1393,42,57,.5],[1392,1404,26,23],[1403,1415,25,24],
  [1434,1442,13,12],[1444,1455,17,16],[1457,1465,5,5],[1465,1478,6,6],[1479,1488,6,6],[1488,1511,31,25,.65],[1511,1534,30,31],[1566,1577,13,19],[1578,1601,24,37],[1600,1613,20,22],[1613,1629,11,11],[1632,1646,6,8],[1659,1682,11,11],[1693,1702,4,4]
];
const clips = [[419,587],[595,897],[951,1420],[1432,1716]];

function voxPath(cy) {
  seed = 11;
  return vox.map(([a, b, up, dn, pk = .5]) => {
    const top = [], bot = [], n = Math.max(6, Math.round(b - a));
    for (let i = 0; i <= n; i++) {
      const t = i / n, s = t < pk ? t / pk : (1 - t) / (1 - pk), x = a + (b - a) * t - ORIGIN;
      const shape = h => h > 30 ? .55 * Math.pow(s, .25) + .45 * Math.pow(s, 1.8) : Math.pow(s, .28);
      const j = s > .9 ? 1 : .76 + .24 * rnd(), k = s > .9 ? 1 : .76 + .24 * rnd();
      top.push(`${x.toFixed(1)} ${(cy - up * shape(up) * j).toFixed(1)}`);
      bot.unshift(`${x.toFixed(1)} ${(cy + dn * shape(dn) * k).toFixed(1)}`);
    }
    return `M${top.concat(bot).join('L')}z`;
  }).join('');
}

// Backing track level over time: x, level above, level below
const env = [
  [332,0,0],[333,11,12],[345,8,9],[360,9,9],[372,1,1],[376,1,1],[378,9,9],[395,7,7],[405,8,7],[414,1,1],[422,0,0],[425,9,7],[429,1,1],[433,2,2],[437,13,11],[450,10,10],[463,1,1],[467,6,7],[480,9,9],[500,8,9],[509,1,1],[514,16,14],[525,9,10],[538,19,14],[552,1,1],[557,12,10],[575,8,8],[596,8,8],[603,18,16],[609,3,3],[616,9,8],[628,18,18],[636,8,9],[650,21,23],[660,15,18],[675,19,20],[684,5,6],[689,0,0],
  [691,20,14],[695,4,4],[700,0,0],[702,19,13],[706,4,4],[711,0,0],[714,22,13],[718,4,4],[723,0,0],[725,22,20],[732,7,9],[735,3,6],[737,23,16],[748,23,21],[765,21,18],[778,23,21],[790,29,28],[810,29,28],[830,29,29],[852,29,28],[862,21,18],[869,9,9],[880,24,18],[900,22,22],[920,27,21],[940,30,31],[946,30,34],[950,10,10],[957,2,2],[959,15,16],[970,19,18],[985,18,20],[1005,20,19],[1030,22,23],[1050,20,23],[1070,14,18],[1080,19,20],[1093,9,12],[1101,22,18],[1122,23,20],[1136,13,16],[1150,23,21],[1170,22,20],[1187,16,17],[1200,23,22],[1220,27,27],[1245,30,28],[1280,27,25],[1312,29,27],[1316,31,35],[1350,32,34],[1380,33,33],[1402,32,35],[1407,30,35],[1409,16,18],[1415,6,7],[1421,2,2],[1428,0,0],
  [1502,0,0],[1504,12,12],[1512,20,18],[1521,24,24],[1527,31,33],[1560,33,34],[1600,31,33],[1630,32,34],[1653,32,33],[1658,25,20],[1664,12,13],[1675,10,9],[1683,4,5],[1692,1,1],[1694,0,0],[1714,0,0],[1718,8,8],[1722,14,12],[1728,8,9],[1738,2,2],[1748,1,1],[1760,1,1],[1762,0,0]
];
function instPath(cy, s) {
  seed = s;
  const top = [], bot = [];
  let k = 0;
  for (let x = 322; x <= 1765; x += 1.5) {
    while (k < env.length - 2 && env[k + 1][0] < x) k++;
    const [a, u1, d1] = env[k], [b, u2, d2] = env[k + 1];
    const t = Math.min(1, Math.max(0, (x - a) / (b - a)));
    const low = x < 735 ? .42 : .62;
    const spike = () => { const r = rnd(); return low + (.98 - low) * r + (r > .93 ? .2 : 0); };
    top.push(`${(x - ORIGIN).toFixed(1)} ${(cy - (u1 + (u2 - u1) * t) * spike()).toFixed(1)}`);
    bot.unshift(`${(x - ORIGIN).toFixed(1)} ${(cy + (d1 + (d2 - d1) * t) * spike()).toFixed(1)}`);
  }
  return `M${top.concat(bot).join('L')}z`;
}

let lines = '';
for (let i = 0; i < 38; i++) lines += `M${(2 + i * 41.7).toFixed(1)} 0v146`;
const grid = c => `<path d="${lines}" stroke="${c}" stroke-width="2"/>`;

document.getElementById('lane1').innerHTML = grid('#33363a') +
  '<path d="M0 0h1470v145H0z" fill="#0561e0"/>' +
  `<path d="${instPath(37, 5)}${instPath(107, 23)}" fill="#00265c"/>` +
  '<path d="M0 37.500h1470M0 107.500h1470" stroke="#023a8c" opacity=".8"/><path d="M0 145.500h1574" stroke="#26282b"/>';

const voxLane = (id, fill, wave, axis, muted) => {
  let s = grid(muted ? '#33363a' : '#3a4043');
  for (const [a, b] of clips) s += `<path d="M${a - ORIGIN} 1h${b - a}v144h${a - b}z" fill="${fill}"/>`;
  if (muted) {
    s += `<clipPath id="c2">${clips.map(([a, b]) => `<path d="M${a - ORIGIN} 1h${b - a}v144h${a - b}z"/>`).join('')}</clipPath><g clip-path="url(#c2)">${grid('#6b909e')}</g>`;
  }
  s += `<path d="${voxPath(73)}" fill="${wave}"/>`;
  for (const [a, b] of clips) {
    const l = a - ORIGIN, r = b - ORIGIN, m = (l + r) / 2;
    s += `<path d="M${l} 73.500H${r}" stroke="${axis}" opacity=".6"/>`;
    s += `<path d="M${l} 2h9l-9 9zM${r} 2h-10l10 9z" fill="${muted ? '#b5e6fb' : '#eaffff'}"/>`;
    if (muted) {
      s += `<path d="M${l} 128h21l8 17H${l}z" fill="#98999a"/><path d="M${l + 6} 134h3l4-4v12l-4-4h-3z" fill="#eee"/><path d="M${l + 6} 131l8 10" stroke="#eee"/>`;
    } else {
      s += `<path d="M${m - 5} 2h11v9h-11z" fill="#e4fdff"/><path d="M${l} 1.500H${r}M${l} 144.500H${r}" stroke="#14e4ff"/>`;
    }
  }
  document.getElementById(id).innerHTML = s + '<path d="M0 145.500h1574" stroke="#26282b"/>';
};
voxLane('lane2', '#5d8290', '#5f686e', '#4c6b78', true);
voxLane('lane3', '#00c8ec', '#00222a', '#007f98', false);
```
